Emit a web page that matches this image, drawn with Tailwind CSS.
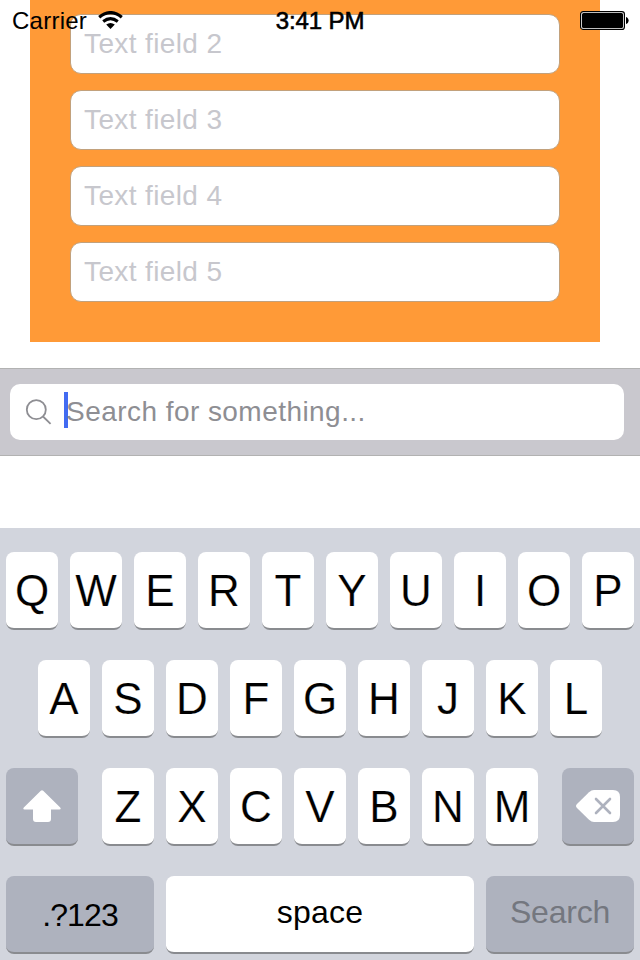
<!DOCTYPE html>
<html lang="en">
<head>
<meta charset="utf-8">
<title>Form</title>
<script src="https://cdn.jsdelivr.net/npm/@tailwindcss/browser@4"></script>
</head>
<body class="bg-white">
<div class="relative flex h-[960px] w-[640px] flex-col overflow-hidden bg-white font-['Liberation_Sans',Arial,sans-serif] text-black">
  <header class="absolute inset-x-0 top-0 z-10 grid h-10 grid-cols-3 items-center text-[24px] leading-[38px]">
    <div class="flex items-center gap-[11px] pl-3">
      <span class="pt-[2px] tracking-[0.25px]">Carrier</span>
      <svg class="h-[18px] w-[25px]" viewBox="0 0 25 18">
        <path d="M1.200 6.200Q12.500-3 23.800 6.200" fill="none" stroke="#000" stroke-width="3.200"/><path d="M5.200 10.500Q12.500 4.700 19.800 10.500" fill="none" stroke="#000" stroke-width="3"/>
        <path d="M8.200 13.600Q12.500 10.200 16.800 13.600L12.500 18Z"/>
      </svg>
    </div>
    <div class="pt-[2px] text-center tracking-[-0.1px] [-webkit-text-stroke:0.6px_#000]">3:41 PM</div>
    <div class="flex justify-end pr-[11px]">
      <svg class="h-[19px] w-[49px]" viewBox="0 0 49 19">
        <rect x=".6" y=".6" width="43.800" height="17.800" rx="2.500" fill="#fff" stroke="#000" stroke-width="1.200"/>
        <rect x="2" y="2" width="41" height="15" rx="1.500"/>
        <path d="M46 6C49.500 7 49.500 12 46 13Z"/>
      </svg>
    </div>
  </header>

  <section class="ml-[30px] flex h-[342px] w-[570px] shrink-0 flex-col gap-4 bg-[#ff9a37] pl-10 pt-[14px] text-[28px] tracking-[0.38px] text-[#c7c7cd]">
    <div class="flex h-[60px] w-[490px] items-center rounded-[11px] border border-[#c2a17c] bg-white pl-[13px]">Text field 2</div>
    <div class="flex h-[60px] w-[490px] items-center rounded-[11px] border border-[#c2a17c] bg-white pl-[13px]">Text field 3</div>
    <div class="flex h-[60px] w-[490px] items-center rounded-[11px] border border-[#c2a17c] bg-white pl-[13px]">Text field 4</div>
    <div class="flex h-[60px] w-[490px] items-center rounded-[11px] border border-[#c2a17c] bg-white pl-[13px]">Text field 5</div>
  </section>

  <section class="mt-[26px] h-[88px] shrink-0 border-y border-[#b2b2b2] bg-[#c9c8ce] pl-[10px] pr-4 pt-[15px]">
    <div class="flex h-14 items-center rounded-[10px] bg-white pl-[15px] text-[28px] text-[#8e8e93]">
      <svg class="h-[27px] w-[27px]" viewBox="0 0 27 27" fill="none" stroke="#8e8e93" stroke-width="1.800"><circle cx="11.300" cy="10.700" r="9.500"/><path d="M18 17.500L25.600 24.900"/></svg>
      <span class="mb-1 ml-3 h-9 w-1 bg-[#426bf2]"></span>
      <span class="-ml-[2px] pb-px tracking-[0.45px]">Search for something...</span>
    </div>
  </section>

  <section class="mt-[72px] flex h-[432px] shrink-0 flex-col gap-[30px] bg-[#d2d5dd] px-[6px] pt-6 text-[44px] leading-[78px]">
    <div class="flex justify-between text-center [-webkit-text-stroke:0.2px_#fff]">
      <kbd class="h-[78px] w-[52px] rounded-[8px] border-b-2 border-[#898b8f] bg-white font-[inherit] text-[44px]">Q</kbd>
      <kbd class="h-[78px] w-[52px] rounded-[8px] border-b-2 border-[#898b8f] bg-white font-[inherit] text-[44px]">W</kbd>
      <kbd class="h-[78px] w-[52px] rounded-[8px] border-b-2 border-[#898b8f] bg-white font-[inherit] text-[44px]">E</kbd>
      <kbd class="h-[78px] w-[52px] rounded-[8px] border-b-2 border-[#898b8f] bg-white font-[inherit] text-[44px]">R</kbd>
      <kbd class="h-[78px] w-[52px] rounded-[8px] border-b-2 border-[#898b8f] bg-white font-[inherit] text-[44px]">T</kbd>
      <kbd class="h-[78px] w-[52px] rounded-[8px] border-b-2 border-[#898b8f] bg-white font-[inherit] text-[44px]">Y</kbd>
      <kbd class="h-[78px] w-[52px] rounded-[8px] border-b-2 border-[#898b8f] bg-white font-[inherit] text-[44px]">U</kbd>
      <kbd class="h-[78px] w-[52px] rounded-[8px] border-b-2 border-[#898b8f] bg-white font-[inherit] text-[44px]">I</kbd>
      <kbd class="h-[78px] w-[52px] rounded-[8px] border-b-2 border-[#898b8f] bg-white font-[inherit] text-[44px]">O</kbd>
      <kbd class="h-[78px] w-[52px] rounded-[8px] border-b-2 border-[#898b8f] bg-white font-[inherit] text-[44px]">P</kbd>
    </div>
    <div class="flex justify-between px-8 text-center [-webkit-text-stroke:0.2px_#fff]">
      <kbd class="h-[78px] w-[52px] rounded-[8px] border-b-2 border-[#898b8f] bg-white font-[inherit] text-[44px]">A</kbd>
      <kbd class="h-[78px] w-[52px] rounded-[8px] border-b-2 border-[#898b8f] bg-white font-[inherit] text-[44px]">S</kbd>
      <kbd class="h-[78px] w-[52px] rounded-[8px] border-b-2 border-[#898b8f] bg-white font-[inherit] text-[44px]">D</kbd>
      <kbd class="h-[78px] w-[52px] rounded-[8px] border-b-2 border-[#898b8f] bg-white font-[inherit] text-[44px]">F</kbd>
      <kbd class="h-[78px] w-[52px] rounded-[8px] border-b-2 border-[#898b8f] bg-white font-[inherit] text-[44px]">G</kbd>
      <kbd class="h-[78px] w-[52px] rounded-[8px] border-b-2 border-[#898b8f] bg-white font-[inherit] text-[44px]">H</kbd>
      <kbd class="h-[78px] w-[52px] rounded-[8px] border-b-2 border-[#898b8f] bg-white font-[inherit] text-[44px]">J</kbd>
      <kbd class="h-[78px] w-[52px] rounded-[8px] border-b-2 border-[#898b8f] bg-white font-[inherit] text-[44px]">K</kbd>
      <kbd class="h-[78px] w-[52px] rounded-[8px] border-b-2 border-[#898b8f] bg-white font-[inherit] text-[44px]">L</kbd>
    </div>
    <div class="flex justify-between text-center">
      <div class="flex h-[78px] w-[72px] items-center justify-center rounded-[8px] border-b-2 border-[#898b8f] bg-[#aeb2be]">
        <svg class="h-8 w-[38px]" viewBox="0 0 38 32" fill="#fff"><path d="M17.800.7Q19-.4 20.200.7L37.200 17.500Q38.500 19.500 36.500 19.500H28V29Q28 32 25 32H13Q10 32 10 29V19.500H1.500Q-.5 19.500.8 17.500Z"/></svg>
      </div>
      <div class="flex gap-3 [-webkit-text-stroke:0.2px_#fff]">
        <kbd class="h-[78px] w-[52px] rounded-[8px] border-b-2 border-[#898b8f] bg-white font-[inherit] text-[44px]">Z</kbd>
        <kbd class="h-[78px] w-[52px] rounded-[8px] border-b-2 border-[#898b8f] bg-white font-[inherit] text-[44px]">X</kbd>
        <kbd class="h-[78px] w-[52px] rounded-[8px] border-b-2 border-[#898b8f] bg-white font-[inherit] text-[44px]">C</kbd>
        <kbd class="h-[78px] w-[52px] rounded-[8px] border-b-2 border-[#898b8f] bg-white font-[inherit] text-[44px]">V</kbd>
        <kbd class="h-[78px] w-[52px] rounded-[8px] border-b-2 border-[#898b8f] bg-white font-[inherit] text-[44px]">B</kbd>
        <kbd class="h-[78px] w-[52px] rounded-[8px] border-b-2 border-[#898b8f] bg-white font-[inherit] text-[44px]">N</kbd>
        <kbd class="h-[78px] w-[52px] rounded-[8px] border-b-2 border-[#898b8f] bg-white font-[inherit] text-[44px]">M</kbd>
      </div>
      <div class="flex h-[78px] w-[72px] items-center justify-center rounded-[8px] border-b-2 border-[#898b8f] bg-[#aeb2be]">
        <svg class="h-8 w-11" viewBox="0 0 44 32"><path fill="#fff" d="M18 0H37Q44 0 44 7V25Q44 32 37 32H18Q15.500 32 13 29.800L1 18Q-1 16 1 14L13 2.200Q15.500 0 18 0Z"/><path d="M20 9L34 23M34 9L20 23" fill="none" stroke="#aeb2be" stroke-width="2.600" stroke-linecap="round"/></svg>
      </div>
    </div>
    <div class="flex justify-between text-center text-[32px]">
      <div class="h-[78px] w-[148px] rounded-[8px] border-b-2 border-[#898b8f] bg-[#aeb2be] leading-[78px] tracking-[-0.9px]">.?123</div>
      <div class="h-[78px] w-[308px] rounded-[8px] border-b-2 border-[#898b8f] bg-white leading-[73px] tracking-[0.2px]">space</div>
      <div class="h-[78px] w-[148px] rounded-[8px] border-b-2 border-[#898b8f] bg-[#aeb2be] leading-[73px] tracking-[-0.2px] text-[#74777f]">Search</div>
    </div>
  </section>
</div>
</body>
</html>
